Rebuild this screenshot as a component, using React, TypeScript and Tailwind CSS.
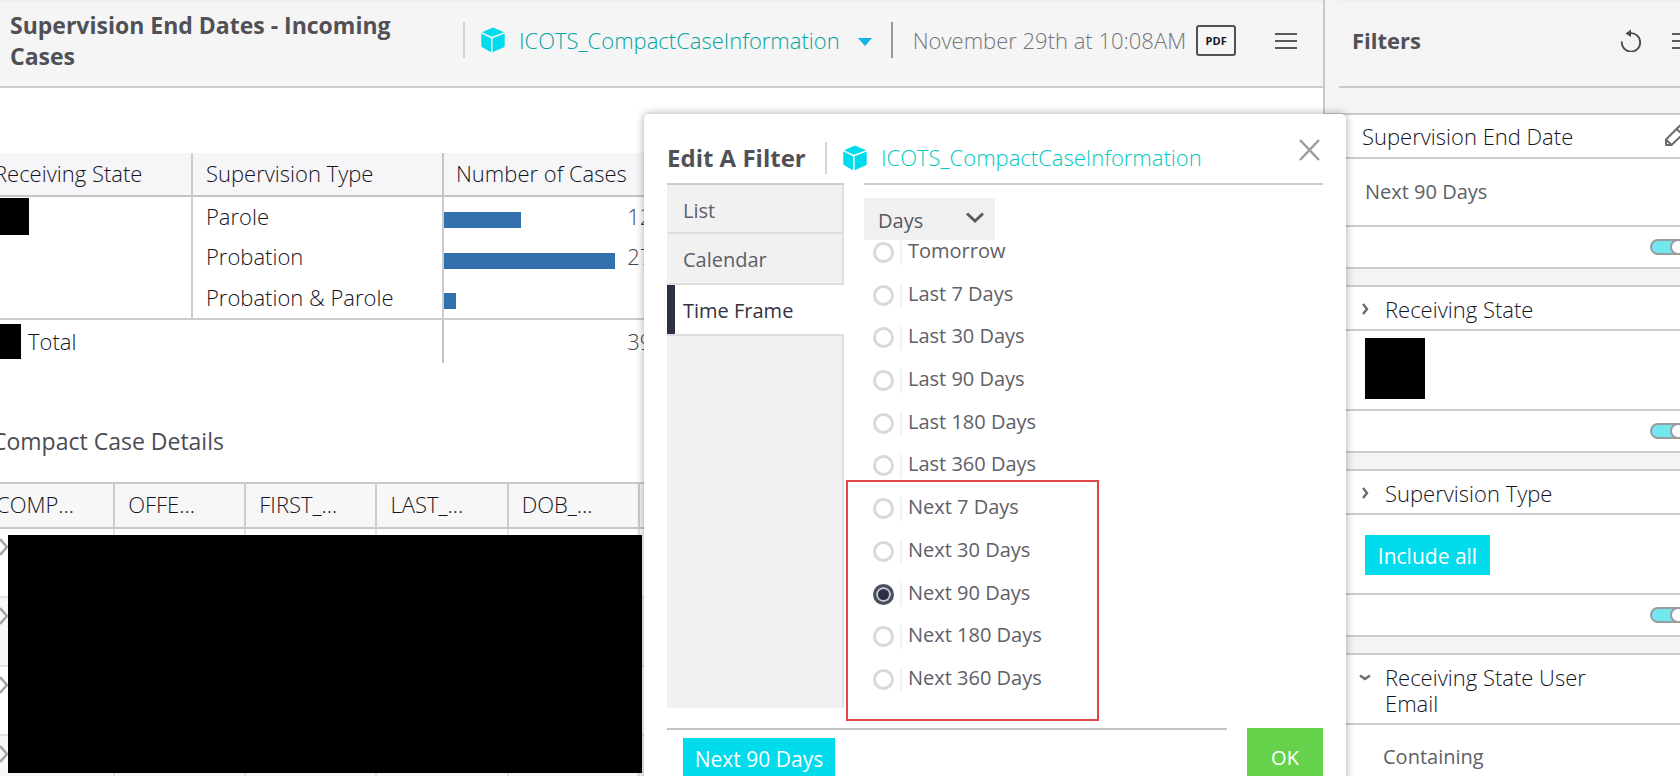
import { useState } from "react";

const caseRows = [
  { type: "Parole", cases: 122, bar: 77 },
  { type: "Probation", cases: 270, bar: 171 },
  { type: "Probation & Parole", cases: 7, bar: 12 },
];

const detailColumns = ["COMP...", "OFFE...", "FIRST_...", "LAST_...", "DOB_...", "OFFE..."];

const timeFrames = [
  "Tomorrow",
  "Last 7 Days",
  "Last 30 Days",
  "Last 90 Days",
  "Last 180 Days",
  "Last 360 Days",
  "Next 7 Days",
  "Next 30 Days",
  "Next 90 Days",
  "Next 180 Days",
  "Next 360 Days",
];

function Cube() {
  return (
    <svg className="h-[26px] w-6 shrink-0" viewBox="0 0 24 26" fill="#00dcec" aria-hidden="true">
      <path d="M12 .5 23 5.2 11 9.800 1 5.2Z" />
      <path d="M.3 6.500 10 11.200V25.200L1.6 20.6Q.3 20 .3 18.600Z" />
      <path d="M23.700 6.500 11.600 11.200V25.200L22.400 20.600Q23.700 20 23.700 18.600Z" />
    </svg>
  );
}

function Menu() {
  return (
    <svg className="h-5 w-6" viewBox="0 0 24 20" stroke="#5a5a5e" strokeWidth="2" aria-hidden="true">
      <path d="M1 4H23M1 11H23M1 18H23" />
    </svg>
  );
}

function Chevron({ open }: { open?: boolean }) {
  return (
    <svg className="mt-[7px] h-3 w-3 shrink-0" viewBox="0 0 12 12" fill="none" stroke="#6a6a6e" strokeWidth="2.400" aria-hidden="true">
      {open ? <path d="M1 4.500 6 8 11 4.500" /> : <path d="M4 1 8 6 4 11" />}
    </svg>
  );
}

function Toggle({ label }: { label: string }) {
  return (
    <div className="flex h-[42px] items-center border-t-2 border-[#cccccc] pl-[325px]">
      <label className="relative block h-4 w-9">
        <input
          type="checkbox"
          defaultChecked
          aria-label={label}
          className="block h-4 w-9 appearance-none rounded-full border-2 border-[#9c9ca0] bg-[#70e8ee]"
        />
        <span className="absolute top-0 right-0 h-4 w-4 rounded-full border-2 border-[#9c9ca0] bg-white" />
      </label>
    </div>
  );
}

function FilterCard({ title, open, children }: { title: string; open?: boolean; children: React.ReactNode }) {
  return (
    <section className="mb-4 border-y-2 border-[#cccccc] bg-white">
      <h3 className="flex gap-[14px] pt-[9px] pr-12 pb-[7px] pl-[34px] text-[22px] leading-[26px] text-[#15151e]">
        <Chevron open={open} />
        <span className="w-[230px]">{title}</span>
      </h3>
      {children}
      <Toggle label={title} />
    </section>
  );
}

export default function App() {
  const [range, setRange] = useState("Next 90 Days");
  return (
    <div className="relative flex h-screen overflow-hidden bg-white font-['Open_Sans',sans-serif] text-[22px] font-light text-[#15151e]">
      <main className="min-w-0 flex-1 overflow-hidden">
        <header className="flex h-[88px] items-center border-t-2 border-b-2 border-t-[#eeeeee] border-b-[#cccccc] bg-[#f5f5f5] pb-2 pl-[10px]">
          <h1 className="w-[453px] pt-[2px] pr-6 text-[23px] leading-[31px] font-bold text-[#505056]">
            Supervision End Dates - Incoming Cases
          </h1>
          <div className="h-9 w-[2px] shrink-0 bg-[#d0d0d0]" />
          <a href="#dataset" className="ml-4 flex items-center gap-[14px] text-[#00a5a1]">
            <Cube />
            ICOTS_CompactCaseInformation
            <svg className="mt-1 ml-[3px] h-2 w-4" viewBox="0 0 16 8" fill="#14b4e4" aria-hidden="true">
              <path d="M1 0H15L8 8Z" />
            </svg>
          </a>
          <div className="ml-[18px] h-9 w-[2px] shrink-0 bg-[#98989c]" />
          <span className="ml-5 whitespace-nowrap text-[#747479]">November 29th at 10:08AM</span>
          <button className="ml-[10px] h-[31px] w-10 shrink-0 rounded-[3px] border-2 border-[#505056] text-[11px] leading-none font-bold">
            PDF
          </button>
          <button aria-label="Menu" className="ml-[38px]">
            <Menu />
          </button>
        </header>

        <table className="-ml-5 mt-[65px] w-[1400px] table-fixed border-collapse text-left">
          <thead>
            <tr className="h-[43px] border-b-2 border-[#c4c4c6] bg-[#f6f6f8]">
              <th className="w-[212px] border-r-2 border-[#cccccc] pb-[2px] pl-[14px] font-light">Receiving State</th>
              <th className="w-[251px] border-r-2 border-[#c4c4c6] pb-[2px] pl-[13px] font-light">Supervision Type</th>
              <th className="pb-[2px] pl-3 font-light">Number of Cases</th>
            </tr>
          </thead>
          <tbody>
            {caseRows.map((row, i) => (
              <tr key={row.type} className="h-[41px]">
                {i === 0 && (
                  <td rowSpan={3} className="border-r-2 border-[#cccccc] align-top">
                    <div className="mt-[1px] h-[37px] w-[49px] bg-black" />
                  </td>
                )}
                <td className="border-r-2 border-[#cccccc] pb-[2px] pl-[13px]">{row.type}</td>
                <td>
                  <div className="flex items-center">
                    <div className="w-[171px]">
                      <div className="mt-[6px] h-4 bg-[#3371ae]" style={{ width: row.bar }} />
                    </div>
                    <span className="w-[50px] pb-[2px] text-right text-[#45454b]">{row.cases}</span>
                  </div>
                </td>
              </tr>
            ))}
            <tr className="h-[44px] border-t-2 border-[#cccccc]">
              <td colSpan={2} className="border-r-2 border-[#c4c4c6]">
                <div className="flex items-center gap-[7px]">
                  <span className="h-[35px] w-[41px] bg-black" />
                  Total
                </div>
              </td>
              <td className="text-[#45454b]">
                <div className="w-[221px] text-right">399</div>
              </td>
            </tr>
          </tbody>
        </table>

        <h2 className="mt-[62px] -ml-2 text-[23px] leading-8 font-normal text-[#4c4c54]">Compact Case Details</h2>
        <div className="relative mt-[25px]">
          <table className="-ml-[17px] w-[788px] table-fixed border-collapse text-left">
            <thead>
              <tr className="h-[45px] border-y-2 border-[#c8c8c8] bg-[#f7f7f7]">
                {detailColumns.map((name, i) => (
                  <th key={i} className="border-r-2 border-[#cccccc] pb-[2px] pl-[13px] font-light">
                    {name}
                  </th>
                ))}
              </tr>
            </thead>
            <tbody>
              {[0, 1, 2, 3].map((r) => (
                <tr key={r} className="h-[69px] border-b-2 border-[#e2e2e4] even:bg-[#f7f7f7]">
                  {detailColumns.map((_, i) => (
                    <td key={i} className="border-r-2 border-[#e2e2e4] align-top">
                      {i === 0 && (
                        <svg className="mt-2 ml-4 h-5 w-3" viewBox="0 0 12 20" fill="none" stroke="#a4a4a8" strokeWidth="2.500" aria-hidden="true">
                          <path d="M1 2 8 10 1 18" />
                        </svg>
                      )}
                    </td>
                  ))}
                </tr>
              ))}
            </tbody>
          </table>
          <div className="absolute top-[53px] left-2 h-[238px] w-[634px] bg-black" />
        </div>
      </main>

      <aside className="w-[357px] shrink-0 overflow-hidden border-l-2 border-[#c8c8ca] bg-[#f4f4f4]">
        <div className="w-[400px]">
          <header className="mb-[25px] ml-[14px] flex h-[88px] items-center border-t-2 border-b-2 border-t-[#eeeeee] border-b-[#c8c8c8] pb-2 pl-[13px]">
            <h2 className="w-[267px] text-[22px] font-bold text-[#505056]">Filters</h2>
            <button aria-label="Reset filters">
              <svg className="h-6 w-6" viewBox="0 0 24 24" fill="none" stroke="#4a4a4e" strokeWidth="1.800" aria-hidden="true">
                <path d="M2.800 13.500A9.200 9.200 0 1 0 11.500 5.200" />
                <path d="M6.500 5.500 12 1.500V9Z" fill="#4a4a4e" stroke="none" />
              </svg>
            </button>
            <button aria-label="Filter menu" className="ml-[28px]">
              <Menu />
            </button>
          </header>

          <section className="mb-4 border-y-2 border-[#cccccc] bg-white">
            <h3 className="flex h-[42px] items-center pl-[37px] text-[22px] text-[#15151e]">
              <span className="w-[302px]">Supervision End Date</span>
              <button aria-label="Edit filter">
                <svg className="h-6 w-6" viewBox="0 0 24 24" fill="none" stroke="#6a6a6e" strokeWidth="2" strokeLinejoin="round" aria-hidden="true">
                  <path d="M2 21V15.500L16 1.500 22 7 7.500 21ZM2 15.500 7.500 21M12.500 5 18.500 10.500" />
                </svg>
              </button>
            </h3>
            <p className="flex h-[68px] items-center border-t-2 border-[#cccccc] pl-10 text-[20px] font-normal text-[#606066]">{range}</p>
            <Toggle label="Supervision End Date" />
          </section>

          <FilterCard title="Receiving State">
            <div className="h-20 border-t-2 border-[#cccccc] pt-[7px] pl-10">
              <div className="h-[61px] w-[60px] bg-black" />
            </div>
          </FilterCard>

          <FilterCard title="Supervision Type">
            <div className="flex h-20 items-center border-t-2 border-[#cccccc] pt-[2px] pl-10">
              <button className="h-10 w-[125px] bg-[#00dcec] pt-1 text-[21px] font-normal text-white">Include all</button>
            </div>
          </FilterCard>

          <FilterCard title="Receiving State User Email" open>
            <p className="flex h-[66px] items-center border-t-2 border-[#cccccc] pl-[58px] text-[20px] font-normal text-[#606066]">Containing</p>
          </FilterCard>
        </div>
      </aside>

      <div
        role="dialog"
        aria-label="Edit A Filter"
        className="absolute top-[114px] right-[334px] w-[702px] rounded-[5px] bg-white pr-[23px] pb-6 pl-[23px] shadow-[0_0_8px_rgba(0,0,0,0.35)]"
      >
        <div className="flex h-[69px] items-center pt-[18px]">
          <h2 className="w-[158px] text-[24px] font-bold text-[#505056]">Edit A Filter</h2>
          <div className="h-8 w-[2px] bg-[#d4d4d4]" />
          <span className="ml-4 flex items-center gap-[14px] text-[#00c8c0]">
            <Cube />
            ICOTS_CompactCaseInformation
          </span>
          <button aria-label="Close" className="mb-4 ml-auto">
            <svg className="h-6 w-6" viewBox="0 0 24 24" stroke="#9c9ca0" strokeWidth="2.500" aria-hidden="true">
              <path d="M1 2 20 22M20 2 1 22" />
            </svg>
          </button>
        </div>

        <div className="relative flex gap-5">
          <div role="tablist" className="flex h-[525px] w-[177px] flex-col border-t-2 border-[#cccccc] text-[20px] font-normal text-[#606066]">
            <button role="tab" className="h-[49px] border-r-2 border-b-2 border-[#dedede] bg-[#f1f1f1] pt-1 pl-4 text-left">List</button>
            <button role="tab" className="h-[51px] border-r-2 border-b-2 border-[#dedede] bg-[#f1f1f1] pt-[2px] pl-4 text-left">Calendar</button>
            <button role="tab" aria-selected="true" className="h-[49px] border-l-8 border-[#2b3044] bg-white pt-[2px] pl-2 text-left text-[#33333d]">
              Time Frame
            </button>
            <div className="flex-1 border-t-2 border-r-2 border-[#dedede] bg-[#f1f1f1]" />
          </div>

          <div className="flex-1 border-t-2 border-[#cccccc] pt-[13px]">
            <div className="relative w-[131px]">
              <select aria-label="Time unit" className="h-[42px] w-full appearance-none bg-[#f0f0f0] px-[14px] pt-1 text-[20px] font-normal text-[#58585e]">
                <option>Days</option>
                <option>Weeks</option>
                <option>Months</option>
              </select>
              <svg className="pointer-events-none absolute top-[14px] right-[11px] h-3 w-[18px]" viewBox="0 0 18 12" fill="none" stroke="#5a5a60" strokeWidth="3" aria-hidden="true">
                <path d="M1 1.500 9 9 17 1.500" />
              </svg>
            </div>
            <div className="flex h-[452px] flex-col justify-between pl-[9px] text-[20px] leading-6 font-normal text-[#606066]">
              {timeFrames.map((name) => (
                <label key={name} className="flex h-[25px] items-center">
                  <input
                    type="radio"
                    name="timeframe"
                    checked={range === name}
                    onChange={() => setRange(name)}
                    className="h-[21px] w-[21px] appearance-none rounded-full border-3 border-[#d9d9d9] bg-white checked:border-[#4a5062] checked:bg-[#2b3044] checked:shadow-[inset_0_0_0_2px_#c6c9d2]"
                  />
                  <span className="ml-[6px] h-6 w-[2px] bg-[#f2f2f2]" />
                  <span className="pb-[3px] pl-[6px]">{name}</span>
                </label>
              ))}
            </div>
          </div>
          <div className="pointer-events-none absolute top-[297px] left-[179px] h-[241px] w-[253px] border-2 border-[#e04848]" />
        </div>

        <div className="mt-5 flex gap-5">
          <div className="flex-1 border-t-2 border-[#c4c4c6] pt-2 pl-4">
            <button className="h-11 w-[152px] bg-[#00dcec] text-[21px] font-normal text-white">{range}</button>
          </div>
          <button className="h-[60px] w-[76px] bg-[#66d14b] text-[20px] font-normal text-white">OK</button>
        </div>
      </div>
    </div>
  );
}
